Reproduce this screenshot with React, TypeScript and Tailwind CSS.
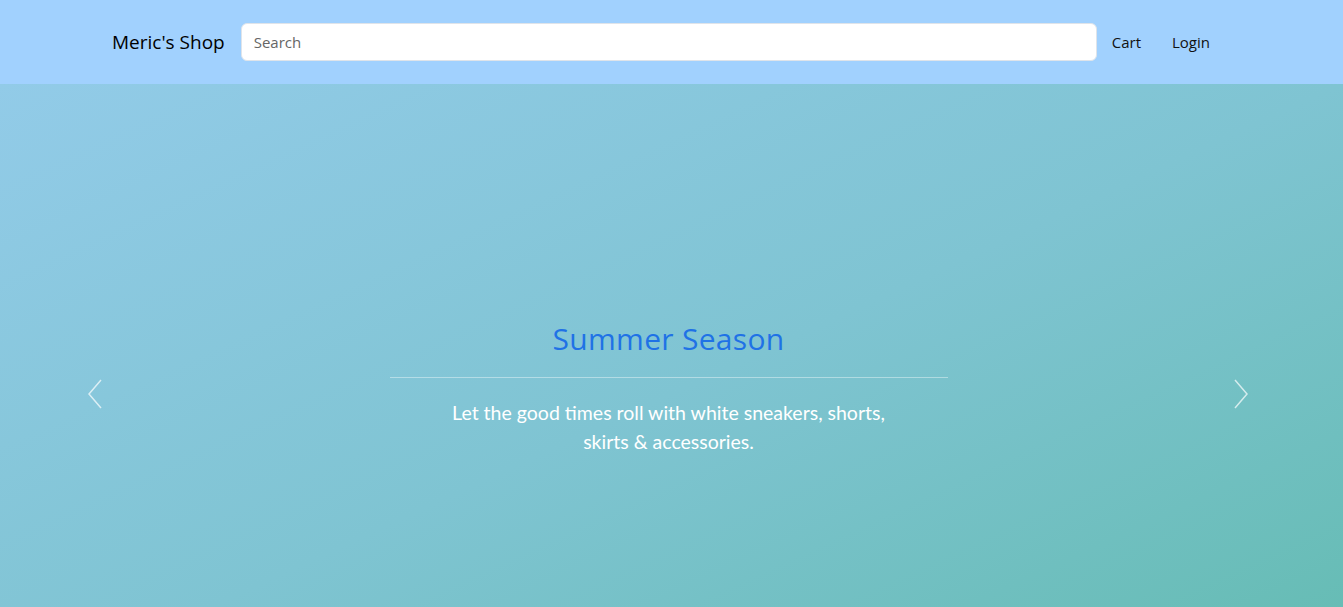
import React from 'react'

const Chevron = ({ dir }: { dir: 'left' | 'right' }) => (
  <svg width="16" height="30" viewBox="0 0 16 30" fill="none" stroke="currentColor" strokeWidth="1.5">
    {dir === 'left' ? <path d="M14 1 L2 15 L14 29" /> : <path d="M2 1 L14 15 L2 29" />}
  </svg>
)

const Navbar = () => (
  <nav className="h-[84px] bg-[#a1d1fe] flex items-center pl-[112px] pr-[133px]">
    <a className="text-[19px] text-black mr-[16px] whitespace-nowrap" href="#">
      Meric's Shop
    </a>
    <input
      className="flex-1 h-[38px] rounded-[6px] bg-white border border-[#dfe4ea] px-[12px] text-[15px] text-[#333] placeholder:text-[#666] outline-none"
      placeholder="Search"
    />
    <div className="flex items-center ml-[15px] gap-[31px] text-[15px] text-[#111]">
      <a href="#">Cart</a>
      <a href="#">Login</a>
    </div>
  </nav>
)

const Hero = () => (
  <section className="relative h-[620px] bg-gradient-to-br from-[#92cbe8] via-[#7fc4d2] to-[#62bbb0] flex items-center justify-center">
    <button className="absolute left-[87px] top-1/2 -translate-y-1/2 text-white/70">
      <Chevron dir="left" />
    </button>
    <div className="flex flex-col items-center text-center w-[558px] -mt-[14px] mr-[6px]">
      <h1 className="text-[30px] text-[#1f72e6] tracking-[0.3px] leading-[40px]">Summer Season</h1>
      <hr className="w-full border-t border-white/40 mt-[18px] mb-[20px]" />
      <p className="text-[19.5px] leading-[29px] text-white w-[470px]" style={{ fontFamily: 'Lato, "Open Sans", sans-serif' }}>
        Let the good times roll with white sneakers, shorts, skirts &amp; accessories.
      </p>
    </div>
    <button className="absolute right-[94px] top-1/2 -translate-y-1/2 text-white/70">
      <Chevron dir="right" />
    </button>
  </section>
)

export default function App() {
  return (
    <div className="overflow-hidden" style={{ fontFamily: '"Open Sans", "Noto Sans", sans-serif' }}>
      <Navbar />
      <Hero />
    </div>
  )
}
